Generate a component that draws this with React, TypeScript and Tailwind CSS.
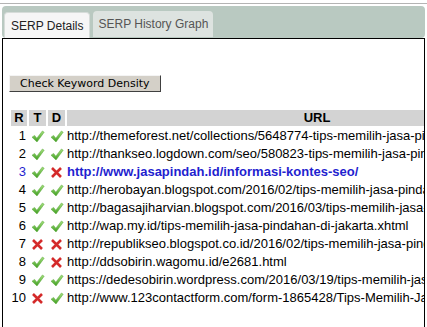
import React from 'react';

type Row = { t: boolean; d: boolean; url: string; hit?: boolean };

const rows: Row[] = [
  { t: true, d: true, url: 'http://themeforest.net/collections/5648774-tips-memilih-jasa-pindahan-rumah' },
  { t: true, d: true, url: 'http://thankseo.logdown.com/seo/580823-tips-memilih-jasa-pindahan' },
  { t: true, d: false, url: 'http://www.jasapindah.id/informasi-kontes-seo/', hit: true },
  { t: true, d: true, url: 'http://herobayan.blogspot.com/2016/02/tips-memilih-jasa-pindahan.html' },
  { t: true, d: true, url: 'http://bagasajiharvian.blogspot.com/2016/03/tips-memilih-jasa-pindahan.html' },
  { t: true, d: true, url: 'http://wap.my.id/tips-memilih-jasa-pindahan-di-jakarta.xhtml' },
  { t: false, d: false, url: 'http://republikseo.blogspot.co.id/2016/02/tips-memilih-jasa-pindahan.html' },
  { t: true, d: false, url: 'http://ddsobirin.wagomu.id/e2681.html' },
  { t: true, d: true, url: 'https://dedesobirin.wordpress.com/2016/03/19/tips-memilih-jasa-pindahan/' },
  { t: false, d: true, url: 'http://www.123contactform.com/form-1865428/Tips-Memilih-Jasa-Pindahan' },
];

function Check() {
  return (
    <svg width="14" height="13" viewBox="0 0 14 13" className="inline-block">
      <defs>
        <linearGradient id="ck" x1="0" y1="0" x2="0" y2="1">
          <stop offset="0" stopColor="#a6e07e" />
          <stop offset="1" stopColor="#3f9e22" />
        </linearGradient>
      </defs>
      <path d="M1 7.2 L3.6 5.4 L5.8 8.2 L11.4 1 L13.2 2.2 L6 12 Z" fill="url(#ck)" stroke="#5aa83a" strokeWidth="0.5" strokeLinejoin="round" />
    </svg>
  );
}

function Cross() {
  return (
    <svg width="13" height="13" viewBox="0 0 13 13" className="inline-block">
      <path d="M2 2 L11 11 M11 2 L2 11" stroke="#d42a2a" strokeWidth="2.6" strokeLinecap="butt" />
    </svg>
  );
}

export default function App() {
  return (
    <div className="w-[427px] h-[327px] overflow-hidden bg-white pt-[3px] font-['Liberation_Sans',Arial,sans-serif]">
      <div className="h-px bg-[#b4b4b4]" />
      <div className="px-[2px] pt-[2px]">
        <div className="h-[32px] rounded-[4px] bg-[#b9c9c1] flex items-end gap-[3px] pl-[2px]">
          <div className="h-[26px] px-[6px] rounded-t-[4px] bg-[#f6f6f6] border border-b-0 border-[#d6dcd9] text-[12px] text-[#222] flex items-center">
            SERP Details
          </div>
          <div className="h-[26px] mb-[1px] px-[5px] rounded-t-[4px] bg-[#dde3e0] text-[12px] text-[#555] flex items-center">
            SERP History Graph
          </div>
        </div>
        <div className="h-[290px] border-t border-l border-r border-black overflow-hidden pl-[6px] pt-[31px]">
          <button className="h-[17px] px-[10px] bg-[#d4d0c8] border border-t-[#f4f4f4] border-l-[#f4f4f4] border-r-[#404040] border-b-[#404040] text-[11px] leading-none text-black font-['DejaVu_Sans',Verdana,sans-serif]">
            Check Keyword Density
          </button>
          <table className="mt-[14px] border-separate border-spacing-[2px] whitespace-nowrap text-[13px] leading-[16px]">
            <thead>
              <tr className="font-bold">
                <th className="w-[16px] min-w-[16px] h-[16px] bg-[#d3d3d3] p-0 text-center">R</th>
                <th className="w-[17px] min-w-[17px] bg-[#d3d3d3] p-0 text-center">T</th>
                <th className="w-[17px] min-w-[17px] bg-[#d3d3d3] p-0 text-center">D</th>
                <th className="w-[500px] min-w-[500px] bg-[#d3d3d3] p-0 text-center">URL</th>
              </tr>
            </thead>
            <tbody>
              {rows.map((r, i) => (
                <tr key={i} className={r.hit ? 'text-[#1f1fcf] font-bold' : 'text-black'}>
                  <td className="h-[16px] p-0 text-right pr-[1px] font-normal">{i + 1}</td>
                  <td className="p-0 text-center align-middle">{r.t ? <Check /> : <Cross />}</td>
                  <td className="p-0 text-center align-middle">{r.d ? <Check /> : <Cross />}</td>
                  <td className="p-0">{r.url}</td>
                </tr>
              ))}
            </tbody>
          </table>
        </div>
      </div>
    </div>
  );
}
